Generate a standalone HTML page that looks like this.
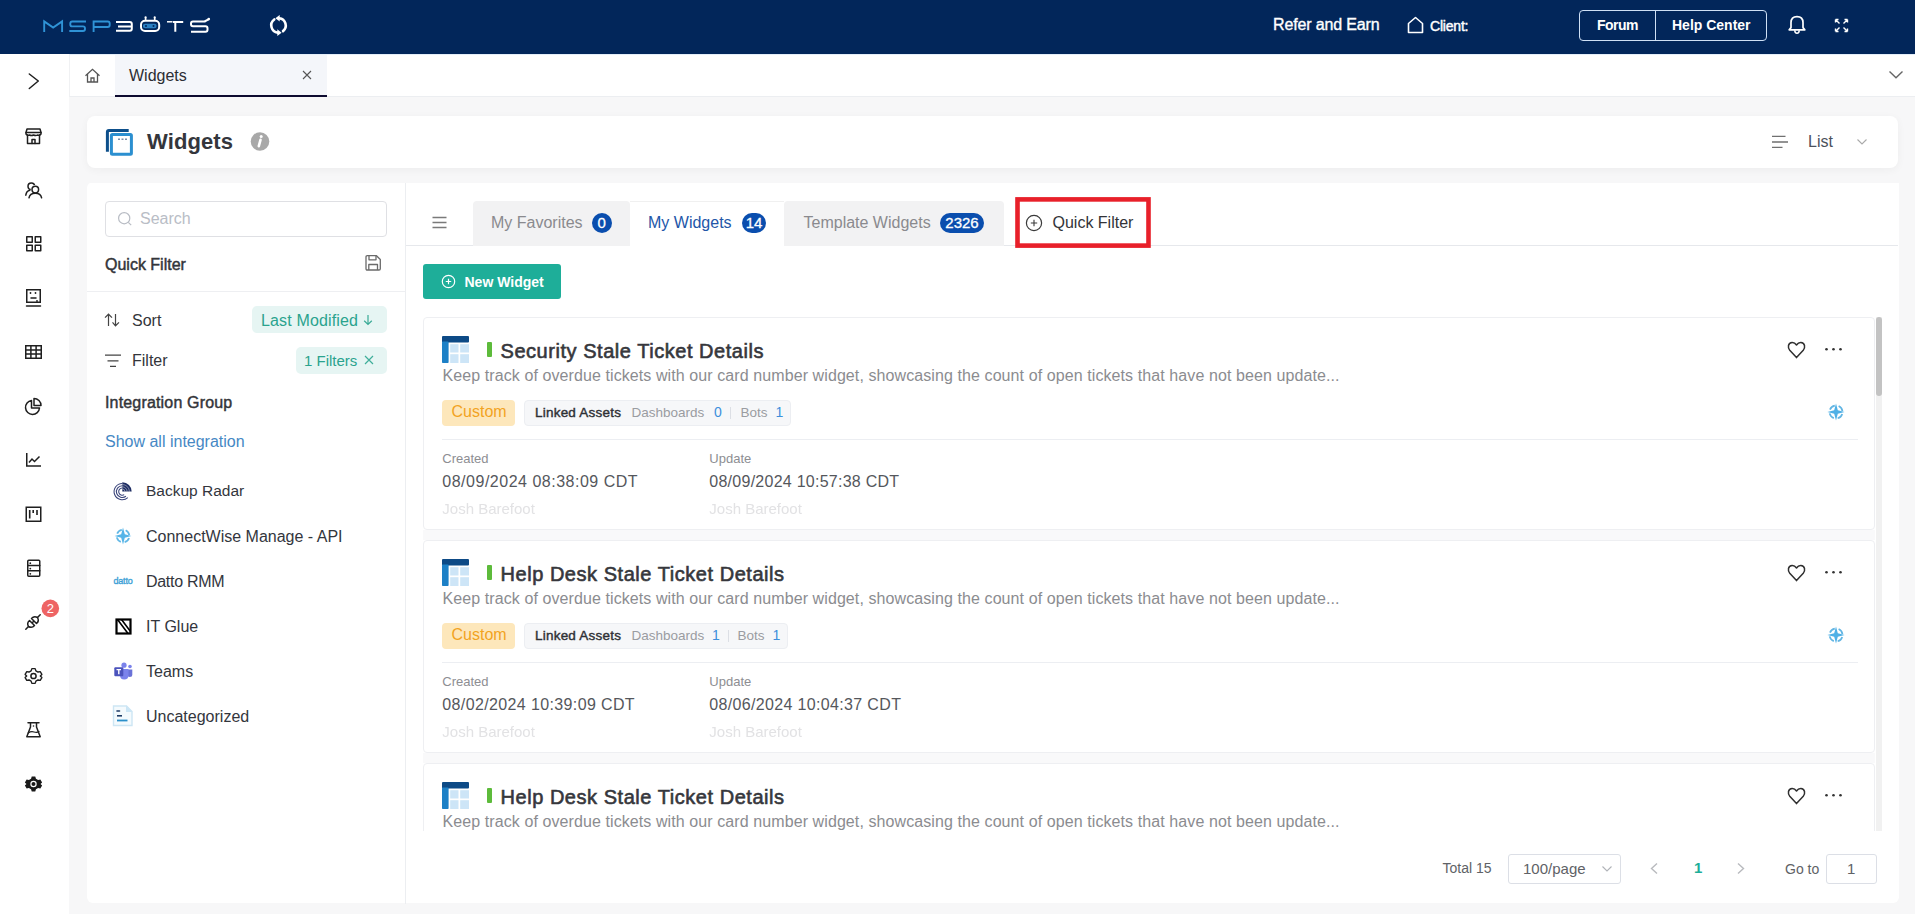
<!DOCTYPE html>
<html><head><meta charset="utf-8">
<style>
*{box-sizing:border-box;margin:0;padding:0}
html,body{width:1915px;height:914px;overflow:hidden;background:#f7f7f8;font-family:"Liberation Sans",sans-serif;color:#333}
.abs{position:absolute}
#hdr{position:absolute;left:0;top:0;width:1915px;height:54px;background:#02265a}
#side{position:absolute;left:0;top:54px;width:69px;height:860px;background:#fff}
#tabbar{position:absolute;left:69px;top:54px;width:1846px;height:43px;background:#fff;border-bottom:1px solid #eceef1;border-left:1px solid #f0f1f3}
#titlecard{position:absolute;left:87px;top:116px;width:1811px;height:52px;background:#fff;border-radius:8px;box-shadow:0 2px 9px rgba(0,0,0,0.045)}
#fpanel{position:absolute;left:87px;top:182px;width:318px;height:721px;background:#fff;border-radius:6px 0 0 6px}
#rpanel{position:absolute;left:405px;top:182px;width:1494px;height:721px;background:#fff;border-radius:0 0 6px 0}
</style></head>
<body>
<div id="hdr">
 <svg class="abs" style="left:40px;top:14px" width="175" height="22" viewBox="0 0 175 22">
  <g fill="none" stroke-width="1.9" stroke-linejoin="miter" stroke-linecap="butt">
   <g stroke="#2f93d6">
    <path d="M4.2,18 L4.2,7.4 L13.15,13.6 L22.1,7.4 L22.1,18"/>
    <path d="M46,7.5 L32.3,7.5 Q30.3,7.5 30.3,9.5 L30.3,10.4 Q30.3,12.4 32.3,12.4 L43,12.4 Q45,12.4 45,14.4 L45,15 Q45,17 43,17 L29.3,17"/>
    <path d="M53.6,18 L53.6,7.5 L67.7,7.5 Q69.7,7.5 69.7,9.5 L69.7,11 Q69.7,13 67.7,13 L54.5,13"/>
   </g>
   <g stroke="#fff" stroke-width="2">
    <path d="M76,8 L89.8,8 Q91.8,8 91.8,10 L91.8,14.7 Q91.8,16.7 89.8,16.7 L76,16.7 M78,12.4 L91.8,12.4"/>
    <rect x="101" y="6.7" width="18.2" height="10.3" rx="4"/>
    <path d="M105.6,3.6 L105.6,6.7 M114.7,3.6 L114.7,6.7" stroke-width="1.6"/>
    <path d="M127,7.8 L132.5,7.8" stroke-width="1.5"/>
    <path d="M133,8 L143.2,8 M135.3,8 L135.3,17.8"/>
    <path d="M165.5,7.5 L153,7.5 Q151,7.5 151,9.5 L151,10.3 Q151,12.3 153,12.3 L165.5,12.3 Q167.5,12.3 167.5,14.3 L167.5,15.7 Q167.5,17.7 165.5,17.7 L151,17.7 M164.5,7.5 L168.5,5.3"/>
   </g>
   <circle cx="105.6" cy="3.4" r="1.1" fill="#fff"/><circle cx="114.7" cy="3.4" r="1.1" fill="#fff"/>
   <circle cx="168.8" cy="5.1" r="1.3" fill="#fff"/>
   <rect x="102.9" y="9.8" width="13.7" height="4.4" rx="2.2" fill="#2a80c2"/>
   <circle cx="106" cy="12" r="1" fill="#02265a"/><circle cx="113.5" cy="12" r="1" fill="#02265a"/>
  </g>
 </svg>
 <svg class="abs" style="left:268px;top:15px" width="21" height="21" viewBox="0 0 21 21">
  <g fill="none" stroke="#fff" stroke-width="2.6" stroke-linecap="round">
   <path d="M6.27,4.45 A7.3,7.3 0 0 0 9.8,17.6"/>
   <path d="M15.03,16.12 A7.3,7.3 0 0 0 11.2,3.2"/>
  </g>
  <path d="M9.3,14.3 L13.6,17.7 L9.3,21 Z" fill="#fff"/>
  <path d="M11.7,-0.1 L7.4,3.3 L11.7,6.6 Z" fill="#fff"/>
 </svg>
 <div class="abs" style="left:1273px;top:15px;font-size:16px;color:#fff;line-height:20px;white-space:nowrap;-webkit-text-stroke:0.35px #fff;letter-spacing:-0.15px" id="refer">Refer and Earn</div>
 <svg class="abs" style="left:1407px;top:16px" width="17" height="18" viewBox="0 0 17 18">
  <path d="M1.5,16.5 L1.5,7.5 L8.5,1.5 L15.5,7.5 L15.5,16.5 Z" fill="none" stroke="#fff" stroke-width="1.6" stroke-linejoin="round"/>
 </svg>
 <div class="abs" style="left:1430px;top:17px;font-size:14px;color:#fff;line-height:18px;white-space:nowrap;-webkit-text-stroke:0.45px #fff;letter-spacing:-0.2px" id="client">Client:</div>
 <div class="abs" style="left:1579px;top:10px;width:188px;height:31px;border:1px solid #cfe0f5;border-radius:4px"></div>
 <div class="abs" style="left:1655px;top:10px;width:1px;height:31px;background:#cfe0f5"></div>
 <div class="abs" style="left:1597px;top:16px;font-size:14px;font-weight:bold;color:#fff;line-height:18px;white-space:nowrap;letter-spacing:-0.5px" id="forum">Forum</div>
 <div class="abs" style="left:1672px;top:16px;font-size:14px;font-weight:bold;color:#fff;line-height:18px;white-space:nowrap" id="help">Help Center</div>
 <svg class="abs" style="left:1787px;top:15px" width="20" height="21" viewBox="0 0 20 21">
  <path d="M2.2,14.8 L4,12.6 L4,7.6 Q4,1.6 10,1.6 Q16,1.6 16,7.6 L16,12.6 L17.8,14.8 Z" fill="none" stroke="#fff" stroke-width="1.7" stroke-linejoin="round"/>
  <path d="M7.8,15.2 Q7.8,18.2 10,18.2 Q12.2,18.2 12.2,15.2" fill="none" stroke="#fff" stroke-width="1.5"/>
 </svg>
 <svg class="abs" style="left:1834px;top:18px" width="15" height="15" viewBox="0 0 15 15">
  <g fill="none" stroke="#fff" stroke-width="1.4">
   <path d="M1.5,1.5 L5.5,5.5 M1.5,1.5 L1.5,4.5 M1.5,1.5 L4.5,1.5"/>
   <path d="M13.5,1.5 L9.5,5.5 M13.5,1.5 L13.5,4.5 M13.5,1.5 L10.5,1.5"/>
   <path d="M1.5,13.5 L5.5,9.5 M1.5,13.5 L1.5,10.5 M1.5,13.5 L4.5,13.5"/>
   <path d="M13.5,13.5 L9.5,9.5 M13.5,13.5 L13.5,10.5 M13.5,13.5 L10.5,13.5"/>
  </g>
 </svg>
</div>
<div id="side">
 <svg class="abs" style="left:0;top:0" width="69" height="860" viewBox="0 54 69 860">
  <g fill="none" stroke="#1f1f1f" stroke-width="1.5" stroke-linejoin="round" stroke-linecap="round">
   <path d="M29.3,74 L38.3,81 L29.3,88.5"/>
   <!-- store -->
   <g transform="translate(25.5,128)">
    <path d="M1.5,1 L14.5,1 L15.5,4.5 L15.5,6 Q14,8 12,7 Q10.5,8 8,7 Q6,8 4,7 Q2,8 0.5,6 L0.5,4.5 Z"/>
    <path d="M2,7 L2,15.5 L14,15.5 L14,7"/>
    <path d="M6.5,15.5 L6.5,11.5 L9.5,11.5 L9.5,15.5"/>
    <path d="M0.5,4.5 L15.5,4.5"/>
   </g>
   <!-- users -->
   <g transform="translate(25,182)">
    <circle cx="6.3" cy="4.2" r="3.3"/>
    <path d="M0.8,13.2 Q1.4,9 4.8,8.3"/>
    <circle cx="10.3" cy="7.6" r="3.5" fill="#fff" stroke="#fff" stroke-width="2.2"/>
    <circle cx="10.3" cy="7.6" r="3.3"/>
    <path d="M4,15.8 Q4.8,11.3 10.3,11.3 Q15.8,11.3 16.6,15.8"/>
   </g>
   <!-- grid -->
   <g transform="translate(26,236)">
    <rect x="0.75" y="0.75" width="5.5" height="5.5"/><rect x="9.25" y="0.75" width="5.5" height="5.5"/>
    <rect x="0.75" y="9.25" width="5.5" height="5.5"/><rect x="9.25" y="9.25" width="5.5" height="5.5"/>
   </g>
   <!-- robot -->
   <g transform="translate(26,289)">
    <rect x="0.75" y="0.75" width="13.5" height="12.5" stroke-linejoin="miter"/>
    <path d="M0.5,17 L14.5,17"/>
    <path d="M5,9 L10,9"/>
   </g>
   <!-- table -->
   <g transform="translate(25,345)" stroke-linejoin="miter">
    <rect x="0.75" y="0.75" width="15.5" height="12.5"/>
    <path d="M0.75,4.9 L16.25,4.9 M0.75,9.1 L16.25,9.1 M5.9,0.75 L5.9,13.25 M11.1,0.75 L11.1,13.25"/>
   </g>
   <!-- pie -->
   <g transform="translate(25,397.5)">
    <path d="M6.5,3 A7,7 0 1 0 14.5,10.5 L6.5,10.5 Z"/>
    <path d="M9,1 L9,8 L16,8 A7,7 0 0 0 9,1 Z"/>
   </g>
   <!-- chart -->
   <g transform="translate(26,453)" stroke-linejoin="miter" stroke-linecap="butt">
    <path d="M0.75,0 L0.75,13 L15,13"/>
    <path d="M3,9.5 L6,6 L8.5,8.5 L13.5,3.5"/>
   </g>
   <!-- board -->
   <g transform="translate(25.5,506.5)" stroke-linejoin="miter" stroke-linecap="butt">
    <rect x="0.75" y="0.75" width="14.5" height="14"/>
    <path d="M4.2,3.5 L4.2,12 M7.7,3.5 L7.7,6.5 M11.5,3.5 L11.5,8.5" stroke-width="1.6"/>
   </g>
   <!-- server -->
   <g transform="translate(27,559.5)" stroke-linejoin="miter">
    <rect x="0.75" y="0.75" width="12" height="16" rx="1"/>
    <path d="M0.75,6 L12.75,6 M0.75,11.3 L12.75,11.3"/>
   </g>
   <!-- plug -->
   <g transform="translate(25,614)">
    <path d="M0.8,15.2 L3.5,12.5"/>
    <path d="M3.5,12.5 Q1.5,9 4.5,6.5 L9.5,11.5 Q7,14.5 3.5,12.5 Z"/>
    <path d="M7.5,8.5 L8.5,7.5"/>
    <path d="M12.5,3.5 Q14.5,7 11.5,9.5 L6.5,4.5 Q9,1.5 12.5,3.5 Z"/>
    <path d="M12.5,3.5 L15.2,0.8"/>
   </g>
   <!-- gear outline -->
   <g transform="translate(33.5,676)">
    <path d="M-1.8,-8 L1.8,-8 L2.6,-5.6 L4.9,-4.3 L7.3,-4.8 L9.1,-1.7 L7.4,0 L9.1,1.7 L7.3,4.8 L4.9,4.3 L2.6,5.6 L1.8,8 L-1.8,8 L-2.6,5.6 L-4.9,4.3 L-7.3,4.8 L-9.1,1.7 L-7.4,0 L-9.1,-1.7 L-7.3,-4.8 L-4.9,-4.3 L-2.6,-5.6 Z" transform="scale(0.92)"/>
    <circle cx="0" cy="0" r="2.6"/>
   </g>
   <!-- flask -->
   <g transform="translate(26,722)">
    <path d="M2,0.75 L13,0.75 M4.5,0.75 L4.5,5 L0.8,14.8 L14.2,14.8 L10.5,5 L10.5,0.75"/>
    <path d="M2.2,11 Q5,9 8,10 Q11,11 13,9.5" stroke-width="1.2"/>
   </g>
  </g>
  <circle cx="37" cy="301" r="0.9" fill="#1f1f1f"/><circle cx="30.5" cy="293" r="0.9" fill="#1f1f1f"/><circle cx="35.5" cy="293" r="0.9" fill="#1f1f1f"/>
  <circle cx="30.3" cy="563.2" r="0.9" fill="#1f1f1f"/><circle cx="30.3" cy="568.6" r="0.9" fill="#1f1f1f"/><circle cx="30.3" cy="573.8" r="0.9" fill="#1f1f1f"/>
  <circle cx="33.5" cy="726" r="0.8" fill="#1f1f1f"/>
  <!-- solid gear -->
  <g transform="translate(33.5,784)" fill="#1a1a1a">
   <path d="M-2,-8.5 L2,-8.5 L2.8,-6 L5.2,-4.6 L7.8,-5.1 L9.8,-1.8 L8,0 L9.8,1.8 L7.8,5.1 L5.2,4.6 L2.8,6 L2,8.5 L-2,8.5 L-2.8,6 L-5.2,4.6 L-7.8,5.1 L-9.8,1.8 L-8,0 L-9.8,-1.8 L-7.8,-5.1 L-5.2,-4.6 L-2.8,-6 Z" transform="scale(0.88)"/>
   <circle cx="0" cy="0" r="3.2" fill="#fff"/>
   <circle cx="0" cy="0" r="2" fill="#1a1a1a"/>
  </g>
  <circle cx="50.3" cy="608.4" r="8.8" fill="#ee6464"/>
  <text x="50.3" y="613.2" font-family="Liberation Sans" font-size="13" fill="#fff" text-anchor="middle">2</text>
 </svg>
</div>
<div class="abs" style="left:69px;top:54px;width:1846px;height:1px;background:#e4eef9;z-index:2"></div>
<div id="tabbar">
 <svg class="abs" style="left:14px;top:13px" width="18" height="18" viewBox="0 0 18 18">
  <g fill="none" stroke="#555" stroke-width="1.3" stroke-linejoin="miter">
   <path d="M1.5,8.8 L8.5,2.3 L15.5,8.8"/>
   <path d="M3.5,7 L3.5,15 L13.5,15 L13.5,7"/>
   <path d="M7,15 L7,11 L10,11 L10,15"/>
  </g>
 </svg>
 <div class="abs" style="left:45px;top:1px;width:212px;height:42px;background:#f4f6fa;border-bottom:2px solid #0e0b30"></div>
 <div class="abs" id="tabw" style="left:59px;top:12px;font-size:16px;color:#2b2d33;line-height:20px">Widgets</div>
 <svg class="abs" style="left:232px;top:16px" width="10" height="10" viewBox="0 0 10 10">
  <path d="M1,1 L9,9 M9,1 L1,9" stroke="#555" stroke-width="1.1"/>
 </svg>
 <svg class="abs" style="left:1818px;top:16px" width="16" height="10" viewBox="0 0 16 10">
  <path d="M1.5,1.5 L8,7.8 L14.5,1.5" fill="none" stroke="#666" stroke-width="1.4"/>
 </svg>
</div>
<div id="titlecard">
 <svg class="abs" style="left:18px;top:13px" width="30" height="30" viewBox="0 0 30 30">
  <path d="M2.4,22.7 L2.4,3 Q2.4,1.5 3.9,1.5 L23.7,1.5" fill="none" stroke="#0d4f8b" stroke-width="3"/>
  <rect x="6.4" y="5.4" width="20" height="19.8" rx="1" fill="#fff" stroke="#2b8fd0" stroke-width="3"/>
  <path d="M13,10.3 L15,10.3 M16.5,10.3 L18.5,10.3 M20,10.3 L22,10.3" stroke="#7a8ea8" stroke-width="1.4"/>
 </svg>
 <div class="abs" id="ttl" style="left:60px;top:13px;font-size:22px;font-weight:bold;color:#34363c;line-height:26px;letter-spacing:0.1px">Widgets</div>
 <svg class="abs" style="left:163px;top:15px" width="20" height="20" viewBox="0 0 20 20">
  <circle cx="10" cy="10.5" r="9.3" fill="#a8a8a8"/>
  <circle cx="11.2" cy="5.6" r="1.5" fill="#fff"/>
  <path d="M10.5,8.8 L8.8,15.2" stroke="#fff" stroke-width="2.6" stroke-linecap="round"/>
 </svg>
 <svg class="abs" style="left:1684px;top:19px" width="18" height="14" viewBox="0 0 18 14">
  <path d="M1,1.3 L14.5,1.3 M1,7 L17,7 M1,12.4 L11.5,12.4" stroke="#707070" stroke-width="1.3"/>
 </svg>
 <div class="abs" id="listt" style="left:1721px;top:16px;font-size:16px;color:#4c515c;line-height:20px">List</div>
 <svg class="abs" style="left:1769px;top:22px" width="12" height="8" viewBox="0 0 12 8">
  <path d="M1.5,1.5 L6,6 L10.5,1.5" fill="none" stroke="#a9a9a9" stroke-width="1.1"/>
 </svg>
</div>
<div id="fpanel">
 <div class="abs" style="left:18px;top:19px;width:282px;height:36px;border:1px solid #dfe0e4;border-radius:4px;background:#fff"></div>
 <svg class="abs" style="left:30px;top:29px" width="16" height="16" viewBox="0 0 16 16">
  <circle cx="7.2" cy="7.2" r="5.6" fill="none" stroke="#b8bcc4" stroke-width="1.2"/>
  <path d="M11.3,11.3 L14.2,14.2" stroke="#b8bcc4" stroke-width="1.2"/>
 </svg>
 <div class="abs" id="srch" style="left:53px;top:27px;font-size:16px;color:#b9bdc6;line-height:20px">Search</div>
 <div class="abs" id="qf" style="left:18px;top:74px;font-size:16px;color:#33353a;line-height:18px;-webkit-text-stroke:0.45px #33353a">Quick Filter</div>
 <svg class="abs" style="left:277px;top:72px" width="18" height="18" viewBox="0 0 18 18">
  <g fill="none" stroke="#6a6a6a" stroke-width="1.3" stroke-linejoin="round">
   <path d="M2,3 Q2,1.7 3.3,1.7 L12.5,1.7 L16.3,5.5 L16.3,14.7 Q16.3,16 15,16 L3.3,16 Q2,16 2,14.7 Z"/>
   <path d="M5,1.7 L5,5.8 L12,5.8 L12,1.7"/>
   <path d="M4.8,16 L4.8,10.5 L13.5,10.5 L13.5,16"/>
  </g>
 </svg>
 <div class="abs" style="left:0;top:109px;width:318px;height:1px;background:#eeeff2"></div>
 <svg class="abs" style="left:17px;top:131px" width="18" height="14" viewBox="0 0 18 14">
  <g fill="none" stroke="#444" stroke-width="1.2">
   <path d="M4.5,13 L4.5,1.2 M1,4.6 L4.5,1.2 L8,4.6"/>
   <path d="M11.5,1 L11.5,12.8 M8.5,9.4 L11.5,12.8 L15,9.4"/>
  </g>
 </svg>
 <div class="abs" id="sort" style="left:45px;top:130px;font-size:16px;color:#33353a;line-height:18px">Sort</div>
 <div class="abs" style="left:165px;top:124px;width:135px;height:27px;background:#e6f5f3;border-radius:5px"></div>
 <div class="abs" id="lastm" style="left:174px;top:130px;font-size:16px;color:#2aa38e;line-height:18px;white-space:nowrap;letter-spacing:0.15px">Last Modified</div>
 <svg class="abs" style="left:276px;top:132px" width="10" height="12" viewBox="0 0 10 12"><path d="M5,1 L5,10.5 M1.2,6.8 L5,10.5 L8.8,6.8" fill="none" stroke="#3aab97" stroke-width="1.2"/></svg>
 <svg class="abs" style="left:17px;top:172px" width="18" height="14" viewBox="0 0 18 14">
  <path d="M1,1.2 L17,1.2 M3.5,6.8 L14.5,6.8 M6,12.4 L12,12.4" stroke="#444" stroke-width="1.2"/>
 </svg>
 <div class="abs" id="filt" style="left:45px;top:170px;font-size:16px;color:#33353a;line-height:18px">Filter</div>
 <div class="abs" style="left:209px;top:165px;width:91px;height:27px;background:#e6f5f3;border-radius:5px"></div>
 <div class="abs" id="filts" style="left:217px;top:170px;font-size:15px;color:#2aa38e;line-height:18px;white-space:nowrap">1 Filters</div>
 <svg class="abs" style="left:277px;top:173px" width="10" height="10" viewBox="0 0 10 10">
  <path d="M1,1 L9,9 M9,1 L1,9" stroke="#3fae9a" stroke-width="1.2"/>
 </svg>
 <div class="abs" id="ig" style="left:18px;top:212px;font-size:16px;color:#33353a;line-height:18px;-webkit-text-stroke:0.45px #33353a;letter-spacing:0.17px">Integration Group</div>
 <div class="abs" id="sai" style="left:18px;top:251px;font-size:16px;color:#4688c4;line-height:18px">Show all integration</div>
 <!-- integration list -->
 <div class="abs" style="left:59px;top:300px;font-size:15.5px;color:#33363d;line-height:18px">Backup Radar</div>
 <div class="abs" style="left:59px;top:346px;font-size:16px;color:#33363d;line-height:18px">ConnectWise Manage - API</div>
 <div class="abs" style="left:59px;top:391px;font-size:16px;color:#33363d;line-height:18px;letter-spacing:-0.3px">Datto RMM</div>
 <div class="abs" style="left:59px;top:436px;font-size:16px;color:#33363d;line-height:18px">IT Glue</div>
 <div class="abs" style="left:59px;top:481px;font-size:16px;color:#33363d;line-height:18px">Teams</div>
 <div class="abs" style="left:59px;top:526px;font-size:16px;color:#33363d;line-height:18px">Uncategorized</div>
 <!-- icons -->
 <svg class="abs" style="left:21px;top:294px" width="30" height="30" viewBox="0 0 30 30">
  <g fill="none" stroke="#38437a" stroke-width="1.05"><path d="M14.30,12.00 A3.6,3.6 0 1 0 16.21,18.65" /><path d="M14.30,9.70 A5.9,5.9 0 1 0 17.93,20.25" /><path d="M14.30,7.40 A8.2,8.2 0 1 0 19.79,21.69" /></g>
  <path d="M14.3,15.6 L14.3,6.199999999999999 A9.4,9.4 0 0 1 23.700000000000003,15.6 Z" fill="#1e2d63"/><path d="M14.3,13.0 A2.6,2.6 0 0 1 16.900000000000002,15.6" fill="none" stroke="#fff" stroke-width="0.8" opacity="0.55"/><path d="M14.3,10.8 A4.8,4.8 0 0 1 19.1,15.6" fill="none" stroke="#fff" stroke-width="0.8" opacity="0.55"/><path d="M14.3,8.5 A7.1,7.1 0 0 1 21.4,15.6" fill="none" stroke="#fff" stroke-width="0.8" opacity="0.55"/>
 </svg>
 <svg class="abs" style="left:27px;top:345px" width="18" height="18" viewBox="0 0 18 18">
  <circle cx="9" cy="9" r="6.3" fill="none" stroke="#62b8e6" stroke-width="1.8" stroke-dasharray="5.9 4" stroke-dashoffset="-2"/>
  <path d="M9,0.6 L10.8,7.2 L17.4,9 L10.8,10.8 L9,17.4 L7.2,10.8 L0.6,9 L7.2,7.2 Z" fill="#55b4e8"/>
 </svg>
 <div class="abs" style="left:26.5px;top:394px;font-size:9px;color:#3c9fd6;line-height:10px;letter-spacing:-0.2px;-webkit-text-stroke:0.35px #3c9fd6">datto</div>
 <svg class="abs" style="left:27.5px;top:435.7px" width="17" height="17" viewBox="0 0 17 17">
  <rect x="1.5" y="1.5" width="14" height="14" fill="none" stroke="#000" stroke-width="2.2"/>
  <path d="M2.5,1.5 L13,15.5 M6.5,1.5 L15.5,13.5" stroke="#000" stroke-width="1.6"/>
 </svg>
 <svg class="abs" style="left:27px;top:479.7px" width="19" height="18" viewBox="0 0 19 18">
  <circle cx="16" cy="4.5" r="1.8" fill="#7b83eb"/>
  <path d="M13.5,7.5 L18.3,7.5 L18.3,12.5 Q18.3,15 15.8,15 Q13.5,15 13.5,12.5 Z" fill="#6a72d8"/>
  <circle cx="10" cy="3.2" r="2.6" fill="#7b83eb"/>
  <path d="M6,7 L14.5,7 L14.5,13 Q14.5,17.5 10.2,17.5 Q6,17.5 6,13 Z" fill="#7b83eb"/>
  <rect x="0.3" y="5.2" width="9" height="9" rx="1" fill="#4b53bc"/>
  <path d="M2.5,7.6 L7,7.6 M4.8,7.6 L4.8,12.3" stroke="#fff" stroke-width="1.4"/>
 </svg>
 <svg class="abs" style="left:25px;top:522px" width="22" height="23" viewBox="0 0 22 23">
  <path d="M1.5,2 L14.5,2 L20,7.5 L20,21.5 L1.5,21.5 Z" fill="#f4fafd" stroke="#cde6f4" stroke-width="1.4"/>
  <path d="M14,1.5 L20.5,8 L14,8 Z" fill="#cbe5f5"/>
  <path d="M5,7 L7.5,7" stroke="#1d3b66" stroke-width="1.6" stroke-linecap="round"/>
  <path d="M5,11.8 L10,11.8" stroke="#1d3b66" stroke-width="1.6"/>
  <path d="M5,16.5 L15.5,16.5" stroke="#2a8fc9" stroke-width="1.8"/>
 </svg>
</div>
<div id="rpanel"></div>
<div id="rlayer">
<div class="abs" style="left:405px;top:182px;width:1px;height:722px;background:#eceef1"></div>
<svg class="abs" style="left:432px;top:216px" width="15" height="13" viewBox="0 0 15 13"><path d="M0.5,1.5 L14.5,1.5 M0.5,6.5 L14.5,6.5 M0.5,11.5 L14.5,11.5" stroke="#7a7a7a" stroke-width="1.3"/></svg>
<div class="abs" style="left:406px;top:245px;width:1492px;height:1px;background:#e6e8ec"></div>
<div class="abs" style="left:473px;top:201px;width:157px;height:45px;background:#f2f2f3;border-radius:4px 4px 0 0"></div>
<div class="abs" style="left:630px;top:201px;width:154px;height:45px;background:#fff;border-top:1px solid #f0f0f0"></div>
<div class="abs" style="left:784px;top:201px;width:220px;height:45px;background:#f2f2f3;border-radius:4px 4px 0 0"></div>
<div class="abs" style="left:491.0px;top:214.5px;font-size:16px;line-height:16px;font-weight:normal;color:#8a8a8e;white-space:nowrap;">My Favorites</div>
<div class="abs" style="left:648.0px;top:214.5px;font-size:16px;line-height:16px;font-weight:normal;color:#2356a8;white-space:nowrap;">My Widgets</div>
<div class="abs" style="left:803.5px;top:214.5px;font-size:16px;line-height:16px;font-weight:normal;color:#8a8a8e;white-space:nowrap;">Template Widgets</div>
<div class="abs" style="left:592.0px;top:213px;width:19.5px;height:20px;border-radius:10px;background:#0a4eae;color:#fff;font-size:15px;line-height:20px;text-align:center;-webkit-text-stroke:0.3px #fff">0</div>
<div class="abs" style="left:742.0px;top:213px;width:24.0px;height:20px;border-radius:10px;background:#0a4eae;color:#fff;font-size:15px;line-height:20px;text-align:center;-webkit-text-stroke:0.3px #fff">14</div>
<div class="abs" style="left:940.0px;top:213px;width:44.0px;height:20px;border-radius:10px;background:#0a4eae;color:#fff;font-size:15px;line-height:20px;text-align:center;-webkit-text-stroke:0.3px #fff">2326</div>
<svg class="abs" style="left:1013px;top:195px" width="140" height="55" viewBox="0 0 140 55"><rect x="4.5" y="4.4" width="131" height="46.2" fill="none" stroke="#e8202a" stroke-width="4.6"/></svg>
<svg class="abs" style="left:1025px;top:214px" width="18" height="18" viewBox="0 0 18 18"><circle cx="9" cy="9" r="7.6" fill="none" stroke="#3a3a3a" stroke-width="1.2"/><path d="M5.8,9 L12.2,9 M9,5.8 L9,12.2" stroke="#3a3a3a" stroke-width="1.1"/></svg>
<div class="abs" style="left:1052.5px;top:214.5px;font-size:16px;line-height:16px;font-weight:normal;color:#333438;white-space:nowrap;">Quick Filter</div>
<div class="abs" style="left:423px;top:264px;width:138px;height:35px;background:#1eae99;border-radius:3px"></div>
<svg class="abs" style="left:441px;top:274px" width="15" height="15" viewBox="0 0 15 15"><circle cx="7.5" cy="7.5" r="6.2" fill="none" stroke="#fff" stroke-width="1.2"/><path d="M4.8,7.5 L10.2,7.5 M7.5,4.8 L7.5,10.2" stroke="#fff" stroke-width="1.2"/></svg>
<div class="abs" style="left:464.5px;top:275.2px;font-size:14px;line-height:14px;font-weight:bold;color:#fff;white-space:nowrap;">New Widget</div>
<div class="abs" style="left:405px;top:317px;width:1493px;height:514px;overflow:hidden">
<div class="abs" style="left:18px;top:0px;width:1452px;height:213px;border:1px solid #eeeff2;border-radius:4px;background:#fff"></div>
<svg class="abs" style="left:37px;top:19px" width="27" height="27" viewBox="0 0 27 27"><rect x="0" y="0" width="27" height="6.5" rx="1" fill="#0d4a86"/><rect x="0" y="5.5" width="6.6" height="21.5" rx="0.8" fill="#1d80c6"/><rect x="8.2" y="8.2" width="8.3" height="8.3" fill="#cde5f7"/><rect x="18.2" y="8.2" width="8.8" height="8.3" fill="#cde5f7"/><rect x="8.2" y="18.2" width="8.3" height="8.8" fill="#cde5f7"/><rect x="18.2" y="18.2" width="8.8" height="8.8" fill="#cde5f7"/></svg>
<div class="abs" style="left:82px;top:25.19999999999999px;width:5px;height:14.5px;background:#5dbb3b;border-radius:1px"></div>
<div class="abs" style="left:95.5px;top:23.5px;font-size:20px;line-height:20px;font-weight:normal;color:#36373c;white-space:nowrap;-webkit-text-stroke:0.6px #36373c;letter-spacing:0.54px">Security Stale Ticket Details</div>
<div class="abs" style="left:37.5px;top:51.1px;font-size:16px;line-height:16px;font-weight:normal;color:#8b8c90;white-space:nowrap;letter-spacing:0.09px">Keep track of overdue tickets with our card number widget, showcasing the count of open tickets that have not been update...</div>
<div class="abs" style="left:37px;top:82.5px;width:73px;height:26.5px;background:#fde7bb;border-radius:4px"></div>
<div class="abs" style="left:46.5px;top:87.1px;font-size:16px;line-height:16px;font-weight:normal;color:#f2a31f;white-space:nowrap;">Custom</div>
<div class="abs" style="left:119px;top:82.5px;width:266.5px;height:26.5px;background:#f6f7f9;border:1px solid #eceef2;border-radius:4px"></div>
<div class="abs" style="left:130.0px;top:88.6px;font-size:13.5px;line-height:13.5px;font-weight:normal;color:#2e3035;white-space:nowrap;-webkit-text-stroke:0.4px #2e3035;letter-spacing:0.22px">Linked Assets</div>
<div class="abs" style="left:226.5px;top:88.6px;font-size:13.5px;line-height:13.5px;font-weight:normal;color:#9a9ca1;white-space:nowrap;">Dashboards</div>
<div class="abs" style="left:309.0px;top:88.1px;font-size:14px;line-height:14px;font-weight:normal;color:#3d8fdc;white-space:nowrap;">0</div>
<div class="abs" style="left:325px;top:90px;width:1px;height:12px;background:#dcdfe5"></div>
<div class="abs" style="left:335.5px;top:88.6px;font-size:13.5px;line-height:13.5px;font-weight:normal;color:#9a9ca1;white-space:nowrap;">Bots</div>
<div class="abs" style="left:370.5px;top:88.1px;font-size:14px;line-height:14px;font-weight:normal;color:#3d8fdc;white-space:nowrap;">1</div>
<svg class="abs" style="left:1422.4px;top:86.39999999999998px" width="18" height="18" viewBox="0 0 18 18"><circle cx="9" cy="9" r="6.5" fill="none" stroke="#62b5e3" stroke-width="1.7" stroke-dasharray="6.2 4" stroke-dashoffset="-2"/><path d="M9,0.4 L10.8,7.2 L17.6,9 L10.8,10.8 L9,17.6 L7.2,10.8 L0.4,9 L7.2,7.2 Z" fill="#4fb0e6"/></svg>
<svg class="abs" style="left:1381px;top:24px" width="21" height="18" viewBox="0 0 21 18"><path d="M10.5,16.6 L3.75,9.3 Q1.95,7.1 2.49,4.5 Q3.21,1.5 6.09,1.4 Q8.7,1.3 10.5,4 Q12.3,1.3 14.91,1.4 Q17.79,1.5 18.51,4.5 Q19.05,7.1 17.25,9.3 Z" fill="none" stroke="#2f2f2f" stroke-width="1.5" stroke-linejoin="round"/></svg>
<svg class="abs" style="left:1419px;top:30px" width="19" height="5" viewBox="0 0 19 5"><circle cx="2.5" cy="2.2" r="1.3" fill="#333"/><circle cx="9.5" cy="2.2" r="1.3" fill="#333"/><circle cx="16.5" cy="2.2" r="1.3" fill="#333"/></svg>
<div class="abs" style="left:36.5px;top:122px;width:1416px;height:1px;background:#eceef2"></div>
<div class="abs" style="left:37.3px;top:135.3px;font-size:13px;line-height:13px;font-weight:normal;color:#8d8e92;white-space:nowrap;">Created</div>
<div class="abs" style="left:304.3px;top:135.3px;font-size:13px;line-height:13px;font-weight:normal;color:#8d8e92;white-space:nowrap;">Update</div>
<div class="abs" style="left:37.3px;top:157.1px;font-size:16px;line-height:16px;font-weight:normal;color:#55575c;white-space:nowrap;letter-spacing:0.509px">08/09/2024 08:38:09 CDT</div>
<div class="abs" style="left:304.3px;top:157.1px;font-size:16px;line-height:16px;font-weight:normal;color:#55575c;white-space:nowrap;letter-spacing:0.259px">08/09/2024 10:57:38 CDT</div>
<div class="abs" style="left:37.3px;top:184.2px;font-size:15px;line-height:15px;font-weight:normal;color:#e2e2e4;white-space:nowrap;filter:blur(0.7px)">Josh Barefoot</div>
<div class="abs" style="left:304.3px;top:184.2px;font-size:15px;line-height:15px;font-weight:normal;color:#e2e2e4;white-space:nowrap;filter:blur(0.7px)">Josh Barefoot</div>
<div class="abs" style="left:18px;top:213px;width:1452px;height:10px;background:#f9f9fa"></div>
<div class="abs" style="left:18px;top:223px;width:1452px;height:213px;border:1px solid #eeeff2;border-radius:4px;background:#fff"></div>
<svg class="abs" style="left:37px;top:242px" width="27" height="27" viewBox="0 0 27 27"><rect x="0" y="0" width="27" height="6.5" rx="1" fill="#0d4a86"/><rect x="0" y="5.5" width="6.6" height="21.5" rx="0.8" fill="#1d80c6"/><rect x="8.2" y="8.2" width="8.3" height="8.3" fill="#cde5f7"/><rect x="18.2" y="8.2" width="8.8" height="8.3" fill="#cde5f7"/><rect x="8.2" y="18.2" width="8.3" height="8.8" fill="#cde5f7"/><rect x="18.2" y="18.2" width="8.8" height="8.8" fill="#cde5f7"/></svg>
<div class="abs" style="left:82px;top:248.20000000000005px;width:5px;height:14.5px;background:#5dbb3b;border-radius:1px"></div>
<div class="abs" style="left:95.5px;top:246.5px;font-size:20px;line-height:20px;font-weight:normal;color:#36373c;white-space:nowrap;-webkit-text-stroke:0.6px #36373c;letter-spacing:0.54px">Help Desk Stale Ticket Details</div>
<div class="abs" style="left:37.5px;top:274.1px;font-size:16px;line-height:16px;font-weight:normal;color:#8b8c90;white-space:nowrap;letter-spacing:0.09px">Keep track of overdue tickets with our card number widget, showcasing the count of open tickets that have not been update...</div>
<div class="abs" style="left:37px;top:305.5px;width:73px;height:26.5px;background:#fde7bb;border-radius:4px"></div>
<div class="abs" style="left:46.5px;top:310.1px;font-size:16px;line-height:16px;font-weight:normal;color:#f2a31f;white-space:nowrap;">Custom</div>
<div class="abs" style="left:119px;top:305.5px;width:263.5px;height:26.5px;background:#f6f7f9;border:1px solid #eceef2;border-radius:4px"></div>
<div class="abs" style="left:130.0px;top:311.6px;font-size:13.5px;line-height:13.5px;font-weight:normal;color:#2e3035;white-space:nowrap;-webkit-text-stroke:0.4px #2e3035;letter-spacing:0.22px">Linked Assets</div>
<div class="abs" style="left:226.5px;top:311.6px;font-size:13.5px;line-height:13.5px;font-weight:normal;color:#9a9ca1;white-space:nowrap;">Dashboards</div>
<div class="abs" style="left:307.0px;top:311.1px;font-size:14px;line-height:14px;font-weight:normal;color:#3d8fdc;white-space:nowrap;">1</div>
<div class="abs" style="left:322.5px;top:313px;width:1px;height:12px;background:#dcdfe5"></div>
<div class="abs" style="left:332.5px;top:311.6px;font-size:13.5px;line-height:13.5px;font-weight:normal;color:#9a9ca1;white-space:nowrap;">Bots</div>
<div class="abs" style="left:367.5px;top:311.1px;font-size:14px;line-height:14px;font-weight:normal;color:#3d8fdc;white-space:nowrap;">1</div>
<svg class="abs" style="left:1422.4px;top:309.4px" width="18" height="18" viewBox="0 0 18 18"><circle cx="9" cy="9" r="6.5" fill="none" stroke="#62b5e3" stroke-width="1.7" stroke-dasharray="6.2 4" stroke-dashoffset="-2"/><path d="M9,0.4 L10.8,7.2 L17.6,9 L10.8,10.8 L9,17.6 L7.2,10.8 L0.4,9 L7.2,7.2 Z" fill="#4fb0e6"/></svg>
<svg class="abs" style="left:1381px;top:247px" width="21" height="18" viewBox="0 0 21 18"><path d="M10.5,16.6 L3.75,9.3 Q1.95,7.1 2.49,4.5 Q3.21,1.5 6.09,1.4 Q8.7,1.3 10.5,4 Q12.3,1.3 14.91,1.4 Q17.79,1.5 18.51,4.5 Q19.05,7.1 17.25,9.3 Z" fill="none" stroke="#2f2f2f" stroke-width="1.5" stroke-linejoin="round"/></svg>
<svg class="abs" style="left:1419px;top:253px" width="19" height="5" viewBox="0 0 19 5"><circle cx="2.5" cy="2.2" r="1.3" fill="#333"/><circle cx="9.5" cy="2.2" r="1.3" fill="#333"/><circle cx="16.5" cy="2.2" r="1.3" fill="#333"/></svg>
<div class="abs" style="left:36.5px;top:345px;width:1416px;height:1px;background:#eceef2"></div>
<div class="abs" style="left:37.3px;top:358.3px;font-size:13px;line-height:13px;font-weight:normal;color:#8d8e92;white-space:nowrap;">Created</div>
<div class="abs" style="left:304.3px;top:358.3px;font-size:13px;line-height:13px;font-weight:normal;color:#8d8e92;white-space:nowrap;">Update</div>
<div class="abs" style="left:37.3px;top:380.1px;font-size:16px;line-height:16px;font-weight:normal;color:#55575c;white-space:nowrap;letter-spacing:0.373px">08/02/2024 10:39:09 CDT</div>
<div class="abs" style="left:304.3px;top:380.1px;font-size:16px;line-height:16px;font-weight:normal;color:#55575c;white-space:nowrap;letter-spacing:0.341px">08/06/2024 10:04:37 CDT</div>
<div class="abs" style="left:37.3px;top:407.2px;font-size:15px;line-height:15px;font-weight:normal;color:#e2e2e4;white-space:nowrap;filter:blur(0.7px)">Josh Barefoot</div>
<div class="abs" style="left:304.3px;top:407.2px;font-size:15px;line-height:15px;font-weight:normal;color:#e2e2e4;white-space:nowrap;filter:blur(0.7px)">Josh Barefoot</div>
<div class="abs" style="left:18px;top:436px;width:1452px;height:10px;background:#f9f9fa"></div>
<div class="abs" style="left:18px;top:446px;width:1452px;height:213px;border:1px solid #eeeff2;border-radius:4px;background:#fff"></div>
<svg class="abs" style="left:37px;top:465px" width="27" height="27" viewBox="0 0 27 27"><rect x="0" y="0" width="27" height="6.5" rx="1" fill="#0d4a86"/><rect x="0" y="5.5" width="6.6" height="21.5" rx="0.8" fill="#1d80c6"/><rect x="8.2" y="8.2" width="8.3" height="8.3" fill="#cde5f7"/><rect x="18.2" y="8.2" width="8.8" height="8.3" fill="#cde5f7"/><rect x="8.2" y="18.2" width="8.3" height="8.8" fill="#cde5f7"/><rect x="18.2" y="18.2" width="8.8" height="8.8" fill="#cde5f7"/></svg>
<div class="abs" style="left:82px;top:471.20000000000005px;width:5px;height:14.5px;background:#5dbb3b;border-radius:1px"></div>
<div class="abs" style="left:95.5px;top:469.5px;font-size:20px;line-height:20px;font-weight:normal;color:#36373c;white-space:nowrap;-webkit-text-stroke:0.6px #36373c;letter-spacing:0.54px">Help Desk Stale Ticket Details</div>
<div class="abs" style="left:37.5px;top:497.1px;font-size:16px;line-height:16px;font-weight:normal;color:#8b8c90;white-space:nowrap;letter-spacing:0.09px">Keep track of overdue tickets with our card number widget, showcasing the count of open tickets that have not been update...</div>
<div class="abs" style="left:37px;top:528.5px;width:73px;height:26.5px;background:#fde7bb;border-radius:4px"></div>
<div class="abs" style="left:46.5px;top:533.1px;font-size:16px;line-height:16px;font-weight:normal;color:#f2a31f;white-space:nowrap;">Custom</div>
<div class="abs" style="left:119px;top:528.5px;width:263.5px;height:26.5px;background:#f6f7f9;border:1px solid #eceef2;border-radius:4px"></div>
<div class="abs" style="left:130.0px;top:534.6px;font-size:13.5px;line-height:13.5px;font-weight:normal;color:#2e3035;white-space:nowrap;-webkit-text-stroke:0.4px #2e3035;letter-spacing:0.22px">Linked Assets</div>
<div class="abs" style="left:226.5px;top:534.6px;font-size:13.5px;line-height:13.5px;font-weight:normal;color:#9a9ca1;white-space:nowrap;">Dashboards</div>
<div class="abs" style="left:307.0px;top:534.1px;font-size:14px;line-height:14px;font-weight:normal;color:#3d8fdc;white-space:nowrap;">1</div>
<div class="abs" style="left:322.5px;top:536px;width:1px;height:12px;background:#dcdfe5"></div>
<div class="abs" style="left:332.5px;top:534.6px;font-size:13.5px;line-height:13.5px;font-weight:normal;color:#9a9ca1;white-space:nowrap;">Bots</div>
<div class="abs" style="left:367.5px;top:534.1px;font-size:14px;line-height:14px;font-weight:normal;color:#3d8fdc;white-space:nowrap;">1</div>
<svg class="abs" style="left:1422.4px;top:532.4px" width="18" height="18" viewBox="0 0 18 18"><circle cx="9" cy="9" r="6.5" fill="none" stroke="#62b5e3" stroke-width="1.7" stroke-dasharray="6.2 4" stroke-dashoffset="-2"/><path d="M9,0.4 L10.8,7.2 L17.6,9 L10.8,10.8 L9,17.6 L7.2,10.8 L0.4,9 L7.2,7.2 Z" fill="#4fb0e6"/></svg>
<svg class="abs" style="left:1381px;top:470px" width="21" height="18" viewBox="0 0 21 18"><path d="M10.5,16.6 L3.75,9.3 Q1.95,7.1 2.49,4.5 Q3.21,1.5 6.09,1.4 Q8.7,1.3 10.5,4 Q12.3,1.3 14.91,1.4 Q17.79,1.5 18.51,4.5 Q19.05,7.1 17.25,9.3 Z" fill="none" stroke="#2f2f2f" stroke-width="1.5" stroke-linejoin="round"/></svg>
<svg class="abs" style="left:1419px;top:476px" width="19" height="5" viewBox="0 0 19 5"><circle cx="2.5" cy="2.2" r="1.3" fill="#333"/><circle cx="9.5" cy="2.2" r="1.3" fill="#333"/><circle cx="16.5" cy="2.2" r="1.3" fill="#333"/></svg>
<div class="abs" style="left:36.5px;top:568px;width:1416px;height:1px;background:#eceef2"></div>
<div class="abs" style="left:37.3px;top:581.3px;font-size:13px;line-height:13px;font-weight:normal;color:#8d8e92;white-space:nowrap;">Created</div>
<div class="abs" style="left:304.3px;top:581.3px;font-size:13px;line-height:13px;font-weight:normal;color:#8d8e92;white-space:nowrap;">Update</div>
<div class="abs" style="left:37.3px;top:603.1px;font-size:16px;line-height:16px;font-weight:normal;color:#55575c;white-space:nowrap;letter-spacing:0.373px">08/02/2024 10:39:09 CDT</div>
<div class="abs" style="left:304.3px;top:603.1px;font-size:16px;line-height:16px;font-weight:normal;color:#55575c;white-space:nowrap;letter-spacing:0.341px">08/06/2024 10:04:37 CDT</div>
<div class="abs" style="left:37.3px;top:630.2px;font-size:15px;line-height:15px;font-weight:normal;color:#e2e2e4;white-space:nowrap;filter:blur(0.7px)">Josh Barefoot</div>
<div class="abs" style="left:304.3px;top:630.2px;font-size:15px;line-height:15px;font-weight:normal;color:#e2e2e4;white-space:nowrap;filter:blur(0.7px)">Josh Barefoot</div>
</div>
<div class="abs" style="left:1876px;top:317px;width:6px;height:514px;background:#f1f1f1"></div>
<div class="abs" style="left:1876px;top:317px;width:6px;height:79px;background:#c3c3c3;border-radius:3px"></div>
<div class="abs" style="left:1442.5px;top:860.6px;font-size:14px;line-height:14px;font-weight:normal;color:#606266;white-space:nowrap;">Total 15</div>
<div class="abs" style="left:1508px;top:853.5px;width:113px;height:30.5px;border:1px solid #dcdfe6;border-radius:3px;background:#fff"></div>
<div class="abs" style="left:1523.0px;top:860.8px;font-size:15px;line-height:15px;font-weight:normal;color:#606266;white-space:nowrap;">100/page</div>
<svg class="abs" style="left:1601px;top:865px" width="12" height="8" viewBox="0 0 12 8"><path d="M1.5,1.5 L6,6 L10.5,1.5" fill="none" stroke="#b0b3b8" stroke-width="1.1"/></svg>
<svg class="abs" style="left:1649px;top:862px" width="10" height="13" viewBox="0 0 10 13"><path d="M8,1.5 L2.5,6.5 L8,11.5" fill="none" stroke="#b8babe" stroke-width="1.4"/></svg>
<div class="abs" style="left:1694.0px;top:859.8px;font-size:15px;line-height:15px;font-weight:bold;color:#1eae99;white-space:nowrap;">1</div>
<svg class="abs" style="left:1736px;top:862px" width="10" height="13" viewBox="0 0 10 13"><path d="M2,1.5 L7.5,6.5 L2,11.5" fill="none" stroke="#b8babe" stroke-width="1.4"/></svg>
<div class="abs" style="left:1785.0px;top:862.1px;font-size:14px;line-height:14px;font-weight:normal;color:#606266;white-space:nowrap;">Go to</div>
<div class="abs" style="left:1825.5px;top:853.5px;width:51px;height:30.5px;border:1px solid #dcdfe6;border-radius:3px;background:#fff"></div>
<div class="abs" style="left:1847.0px;top:861.3px;font-size:15px;line-height:15px;font-weight:normal;color:#606266;white-space:nowrap;">1</div>
</div>
<div class="abs" style="left:87px;top:182px;width:1812px;height:1px;background:#f7f7f8"></div>
</body></html>
